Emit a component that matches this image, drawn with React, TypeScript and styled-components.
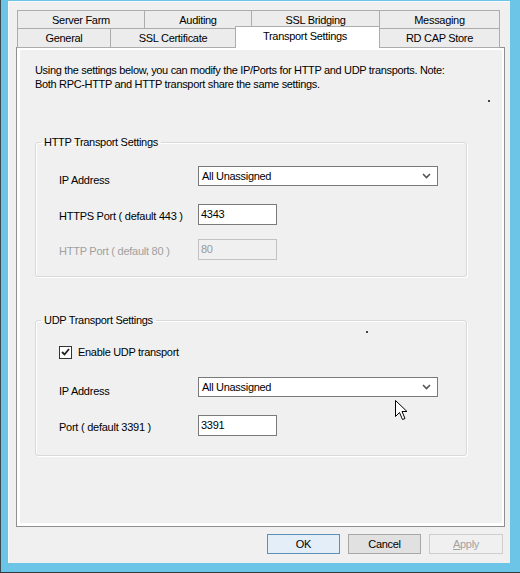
import React from 'react';
import styled, { createGlobalStyle } from 'styled-components';

const Global = createGlobalStyle`
  html, body { margin: 0; padding: 0; background: #6cc5e6; }
  body { font-family: "Liberation Sans", Arial, sans-serif; font-size: 11px; color: #000; }
  * { box-sizing: border-box; }
`;

const Frame = styled.div`
  width: 520px;
  height: 573px;
  background: #6cc5e6;
  border-left: 1px solid #3a4a50;
  border-bottom: 1px solid #30393d;
  padding: 1px 10px 9px 7px;
  display: flex;
`;

const Client = styled.div`
  flex: 1;
  background: #f0f0f0;
  border-left: 1px solid #f8fcfd;
  border-top: 1px solid #f8fcfd;
  display: flex;
  flex-direction: column;
  position: relative;
`;

const TabStrip = styled.div`
  margin: 8px 0 0 8px;
  width: 483px;
  display: flex;
  flex-direction: column;
  position: relative;
  z-index: 2;
`;

const TabRow = styled.div<{ $h: number }>`
  display: flex;
  height: ${p => p.$h}px;
  align-items: flex-start;
`;

const Tab = styled.div<{ $w: number; $active?: boolean; $last?: boolean }>`
  width: ${p => p.$w}px;
  height: ${p => (p.$active ? 'calc(100% + 3px)' : 'calc(100% + 1px)')};
  margin-top: ${p => (p.$active ? -2 : 0)}px;
  margin-right: ${p => (p.$last ? 0 : -1)}px;
  background: ${p => (p.$active ? '#ffffff' : '#ececec')};
  border: 1px solid #acacac;
  border-bottom: ${p => (p.$active ? 'none' : '1px solid #acacac')};
  display: flex;
  align-items: center;
  font-size: 11px;
  letter-spacing: -0.3px;
  padding-bottom: ${p => (p.$active ? 4 : 0)}px;
  justify-content: ${p => (p.$active ? 'flex-start' : 'center')};
  padding-left: ${p => (p.$active ? 27 : 0)}px;
  color: #000;
`;

const Panel = styled.div`
  margin-left: 7px;
  width: 489px;
  height: 480px;
  border: 1px solid #8f8f8f;
  background: #ffffff;
  padding: 2px 2px 3px 3px;
  display: flex;
  position: relative;
  z-index: 1;
`;

const Page = styled.div`
  flex: 1;
  background: #f0f0f0;
  padding: 13px 0 0 15px;
  display: flex;
  flex-direction: column;
  position: relative;
`;

const Note = styled.p`
  margin: 0;
  line-height: 14px;
  letter-spacing: -0.33px;
  white-space: nowrap;
`;

const Group = styled.fieldset<{ $top: number; $h: number }>`
  margin: ${p => p.$top}px 0 0 0;
  width: 432px;
  height: ${p => p.$h}px;
  border: 1px solid #d9d9d9;
  border-radius: 3px;
  box-shadow: inset 1px 1px 0 #ffffff, 1px 1px 0 #ffffff;
  padding: 0 0 0 23px;
  min-inline-size: 0;
`;

const Legend = styled.legend`
  margin-left: -18px;
  padding: 0 3px;
  line-height: 14px;
  letter-spacing: -0.3px;
`;

const Row = styled.div<{ $top: number }>`
  display: flex;
  align-items: center;
  margin-top: ${p => p.$top}px;
  height: 20px;
`;

const Label = styled.div<{ $disabled?: boolean; $drop?: number }>`
  width: 139px;
  color: ${p => (p.$disabled ? '#a0a0a0' : '#000')};
  letter-spacing: -0.25px;
  padding-top: ${p => p.$drop ?? 3}px;
`;

const Select = styled.div`
  width: 240px;
  height: 20px;
  background: #fff;
  border: 1px solid #7a7a7a;
  display: flex;
  align-items: center;
  justify-content: space-between;
  padding: 0 6px 0 3px;
  letter-spacing: -0.3px;
`;

const Input = styled.div<{ $disabled?: boolean }>`
  width: 79px;
  height: 21px;
  background: ${p => (p.$disabled ? '#f0f0f0' : '#fff')};
  border: 1px solid ${p => (p.$disabled ? '#c2c2c2' : '#7a7a7a')};
  color: ${p => (p.$disabled ? '#9a9a9a' : '#000')};
  display: flex;
  align-items: center;
  padding-left: 2px;
  letter-spacing: -0.3px;
`;

const CheckRow = styled.label`
  display: flex;
  align-items: center;
  gap: 6px;
  margin-top: 18px;
  height: 14px;
  letter-spacing: -0.3px;
`;

const Box = styled.span`
  width: 13px;
  height: 13px;
  border: 1px solid #333;
  background: #fff;
  display: flex;
  align-items: center;
  justify-content: center;
`;

const Dot = styled.span<{ $x: number; $y: number }>`
  position: absolute;
  left: ${p => p.$x}px;
  top: ${p => p.$y}px;
  width: 2px;
  height: 2px;
  background: #444;
`;

const Cursor = styled.svg`
  position: absolute;
  left: 375px;
  top: 350px;
`;

const Buttons = styled.div`
  display: flex;
  justify-content: flex-end;
  gap: 8px;
  margin: 7px 7px 0 0;
`;

const Button = styled.div<{ $variant: 'default' | 'normal' | 'disabled' }>`
  width: ${p => (p.$variant === 'disabled' ? 74 : 73)}px;
  height: 20px;
  display: flex;
  align-items: center;
  justify-content: center;
  letter-spacing: -0.3px;
  background: ${p => (p.$variant === 'default' ? '#e3eef8' : p.$variant === 'normal' ? '#e1e1e1' : '#f0f0f0')};
  border: 1px solid ${p => (p.$variant === 'default' ? '#5f8fb8' : p.$variant === 'normal' ? '#a8a8a8' : '#cdcdcd')};
  color: ${p => (p.$variant === 'disabled' ? '#a2a2a2' : '#000')};
  u { text-decoration: underline; }
`;

const Chevron = () => (
  <svg width="9" height="6" viewBox="0 0 9 6">
    <path d="M1 1 L4.5 4.5 L8 1" fill="none" stroke="#555" strokeWidth="1.6" />
  </svg>
);

const App = () => (
  <>
    <Global />
    <Frame>
      <Client>
        <TabStrip>
          <TabRow $h={18}>
            <Tab $w={128}>Server Farm</Tab>
            <Tab $w={108}>Auditing</Tab>
            <Tab $w={129}>SSL Bridging</Tab>
            <Tab $w={121} $last>Messaging</Tab>
          </TabRow>
          <TabRow $h={19}>
            <Tab $w={94}>General</Tab>
            <Tab $w={126}>SSL Certificate</Tab>
            <Tab $w={145} $active>Transport Settings</Tab>
            <Tab $w={121} $last>RD CAP Store</Tab>
          </TabRow>
        </TabStrip>
        <Panel>
          <Page>
            <Note>
              Using the settings below, you can modify the IP/Ports for HTTP and UDP transports. Note:
              <br />
              Both RPC-HTTP and HTTP transport share the same settings.
            </Note>
            <Group $top={44} $h={142}>
              <Legend>HTTP Transport Settings</Legend>
              <Row $top={17}>
                <Label $drop={7}>IP Address</Label>
                <Select>
                  All Unassigned
                  <Chevron />
                </Select>
              </Row>
              <Row $top={18}>
                <Label>HTTPS Port ( default 443 )</Label>
                <Input>4343</Input>
              </Row>
              <Row $top={15}>
                <Label $disabled>HTTP Port ( default 80 )</Label>
                <Input $disabled>80</Input>
              </Row>
            </Group>
            <Group $top={36} $h={143}>
              <Legend>UDP Transport Settings</Legend>
              <CheckRow>
                <Box>
                  <svg width="9" height="8" viewBox="0 0 9 8">
                    <path d="M1 4 L3.5 6.5 L8 1" fill="none" stroke="#222" strokeWidth="1.8" />
                  </svg>
                </Box>
                Enable UDP transport
              </CheckRow>
              <Row $top={18}>
                <Label $drop={7}>IP Address</Label>
                <Select>
                  All Unassigned
                  <Chevron />
                </Select>
              </Row>
              <Row $top={18}>
                <Label>Port ( default 3391 )</Label>
                <Input>3391</Input>
              </Row>
            </Group>
            <Dot $x={468} $y={50} />
            <Dot $x={346} $y={281} />
            <Cursor width="13" height="21" viewBox="0 0 13 21">
              <path d="M0.5 0.5 L0.5 16.5 L4.5 12.5 L7.5 19.5 L10 18.5 L7 11.5 L12 11.5 Z" fill="#fff" stroke="#000" strokeWidth="1" />
            </Cursor>
          </Page>
        </Panel>
        <Buttons>
          <Button $variant="default">OK</Button>
          <Button $variant="normal">Cancel</Button>
          <Button $variant="disabled"><span><u>A</u>pply</span></Button>
        </Buttons>
      </Client>
    </Frame>
  </>
);

export default App;
